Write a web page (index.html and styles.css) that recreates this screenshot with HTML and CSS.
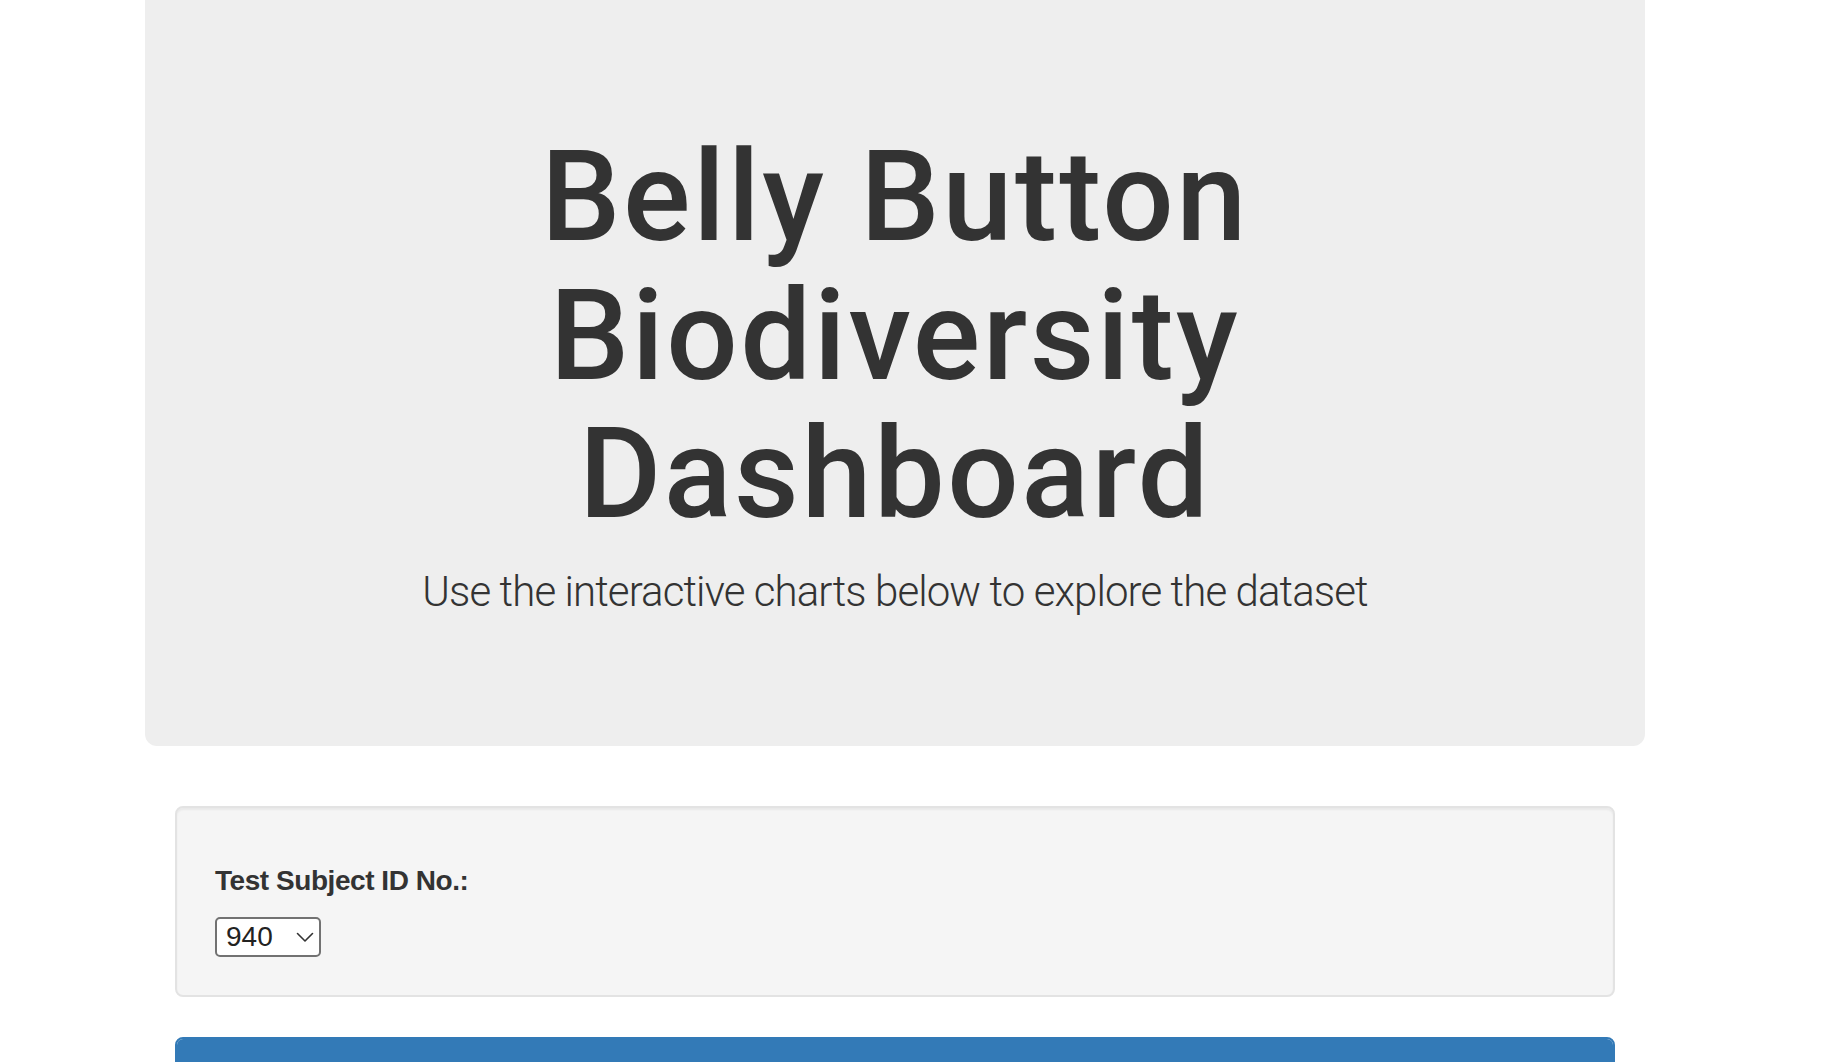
FILE: index.html
```html
<!DOCTYPE html>
<html lang="en">
<head>
<meta charset="utf-8">
<title>Belly Button Biodiversity Dashboard</title>
<link rel="stylesheet" href="styles.css">
</head>
<body>
<div class="page">
  <header class="jumbotron">
    <h1 class="title">Belly Button Biodiversity Dashboard</h1>
    <p class="lead">Use the interactive charts below to explore the dataset</p>
  </header>
  <main class="content">
    <section class="well">
      <h5 class="well-label">Test Subject ID No.:</h5>
      <div class="select-wrap">
        <select class="subject-select">
          <option>940</option>
          <option>941</option>
          <option>943</option>
        </select>
        <svg class="chevron" width="18" height="11" viewBox="0 0 18 11" aria-hidden="true">
          <polyline points="1.5,1.5 9,9 16.5,1.5" fill="none" stroke="#333" stroke-width="1.6" stroke-linecap="round" stroke-linejoin="round"/>
        </svg>
      </div>
    </section>
    <section class="panel">
      <div class="panel-heading"></div>
      <div class="panel-body"></div>
    </section>
  </main>
</div>
</body>
</html>
```
FILE: styles.css
```css
html, body {
  margin: 0;
  padding: 0;
  background: #fff;
}

body {
  color: #333;
  font-family: "Liberation Sans", Arial, Helvetica, sans-serif;
}

.page {
  width: 1500px;
  margin: 0 0 0 145px;
}

.jumbotron {
  background: #eeeeee;
  border-radius: 0 0 12px 12px;
  padding: 96px 120px 94px;
  margin-bottom: 60px;
  text-align: center;
}

.title {
  margin: 32px 0 18px;
  font-family: "Roboto", "Liberation Sans", Arial, sans-serif;
  font-weight: 500;
  font-size: 126px;
  line-height: 138.6px;
  letter-spacing: 2.5px;
  color: #333;
}

.lead {
  margin: 0 0 30px;
  font-family: "Roboto", "Liberation Sans", Arial, sans-serif;
  font-weight: 300;
  font-size: 42px;
  line-height: 60px;
  letter-spacing: -0.9px;
  color: #333;
}

.content {
  padding: 0 30px;
}

.well {
  background: #f5f5f5;
  border: 2px solid #e3e3e3;
  border-radius: 8px;
  box-shadow: inset 0 2px 2px rgba(0, 0, 0, 0.05);
  padding: 38px;
  margin-bottom: 40px;
}

.well-label {
  margin: 20px 0 20px;
  font-size: 28px;
  line-height: 30.8px;
  font-weight: bold;
  letter-spacing: -0.45px;
  color: #333;
}

.select-wrap {
  position: relative;
  width: 106px;
  height: 40px;
}

.subject-select {
  -webkit-appearance: none;
  appearance: none;
  display: block;
  box-sizing: border-box;
  width: 106px;
  height: 40px;
  margin: 0;
  padding: 0 0 0 9px;
  border: 2px solid #727272;
  border-radius: 5px;
  background: #fff;
  color: #222;
  font-family: "Liberation Sans", Arial, sans-serif;
  font-size: 28px;
  line-height: 36px;
}

.chevron {
  position: absolute;
  left: 81px;
  top: 15px;
  pointer-events: none;
}

.panel {
  border: 2px solid #337ab7;
  border-radius: 8px;
  background: #fff;
  margin-bottom: 40px;
}

.panel-heading {
  background: #337ab7;
  height: 76px;
  border-radius: 6px 6px 0 0;
}

.panel-body {
  height: 200px;
}
```
